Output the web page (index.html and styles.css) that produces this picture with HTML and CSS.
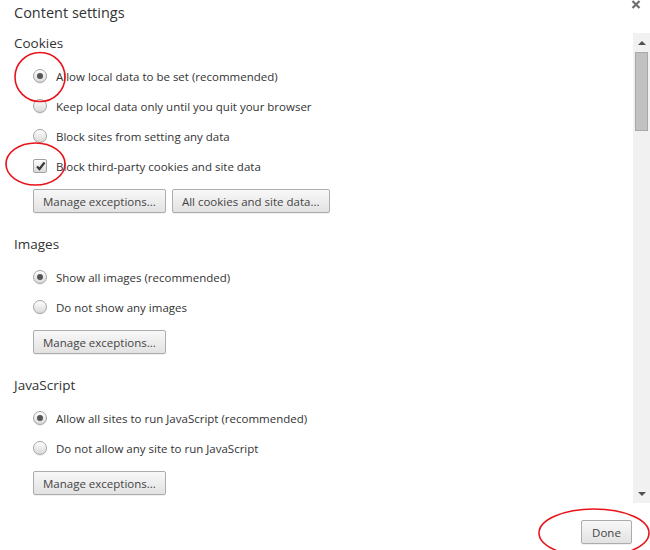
FILE: index.html
```html
<!DOCTYPE html>
<html lang="en">
<head>
  <meta charset="UTF-8" />
  <meta name="viewport" content="width=device-width, initial-scale=1.0" />
  <link rel="stylesheet" href="styles.css">
  <title>Content settings</title>
</head>
<body>
<div class="dialog">
  <div class="dialog-header">
    <h1>Content settings</h1>
    <span class="close-btn">
      <svg width="10" height="9" viewBox="0 0 10 9"><path d="M1.5 1 L8.5 8 M8.5 1 L1.5 8" stroke="#6e6e6e" stroke-width="2.2"/></svg>
    </span>
  </div>

  <div class="dialog-body">
    <div class="scroll-area">

      <!-- Cookies -->
      <section class="setting-group">
        <h2>Cookies</h2>
        <label class="option"><span class="radio checked"></span>Allow local data to be set (recommended)</label>
        <label class="option"><span class="radio"></span>Keep local data only until you quit your browser</label>
        <label class="option"><span class="radio"></span>Block sites from setting any data</label>
        <label class="option"><span class="checkbox checked">
          <svg width="11" height="11" viewBox="0 0 11 11"><path d="M2 5.5 L4.5 8 L9.5 1.5" fill="none" stroke="#3a3a3a" stroke-width="2.2"/></svg>
        </span>Block third-party cookies and site data</label>
        <div class="button-row">
          <button class="btn">Manage exceptions...</button>
          <button class="btn">All cookies and site data...</button>
        </div>
      </section>

      <!-- Images -->
      <section class="setting-group">
        <h2>Images</h2>
        <label class="option"><span class="radio checked"></span>Show all images (recommended)</label>
        <label class="option"><span class="radio"></span>Do not show any images</label>
        <div class="button-row">
          <button class="btn">Manage exceptions...</button>
        </div>
      </section>

      <!-- JavaScript -->
      <section class="setting-group">
        <h2>JavaScript</h2>
        <label class="option"><span class="radio checked"></span>Allow all sites to run JavaScript (recommended)</label>
        <label class="option"><span class="radio"></span>Do not allow any site to run JavaScript</label>
        <div class="button-row">
          <button class="btn">Manage exceptions...</button>
        </div>
      </section>

    </div>

    <div class="scrollbar">
      <span class="arrow up"></span>
      <span class="thumb"></span>
      <span class="arrow down"></span>
    </div>
  </div>

  <div class="dialog-footer">
    <button class="btn done-btn">Done</button>
  </div>
</div>

<!-- red annotation circles -->
<svg class="annotations" width="650" height="550" viewBox="0 0 650 550">
  <ellipse cx="40" cy="77" rx="25" ry="24.5" fill="none" stroke="#e8141b" stroke-width="1.6"/>
  <ellipse cx="35.5" cy="164" rx="29.5" ry="21" fill="none" stroke="#e8141b" stroke-width="1.6"/>
  <ellipse cx="594" cy="533" rx="55" ry="24" fill="none" stroke="#e8141b" stroke-width="1.6"/>
</svg>
</body>
</html>
```

FILE: styles.css
```css
/* Page */
body {
  margin: 0;
  background: #fff;
  font-family: 'Open Sans', Arial, sans-serif;
  font-size: 11.5px;
  color: #333;
  position: relative;
  width: 650px;
  height: 550px;
  overflow: hidden;
}

/* Dialog header */
.dialog-header {
  height: 33px;
  position: relative;
}

.dialog-header h1 {
  margin: 0;
  padding: 4px 14px 0;
  font-size: 14.5px;
  font-weight: normal;
  line-height: 18px;
  color: #333;
}

.close-btn {
  position: absolute;
  top: 0;
  left: 631px;
  line-height: 0;
}

/* Body with scroll area */
.dialog-body {
  display: flex;
  height: 470px;
}

.scroll-area {
  flex: 1;
  padding: 0 0 0 14px;
  overflow: hidden;
}

.setting-group {
  margin-bottom: 21px;
}

.setting-group h2 {
  margin: 0 0 8px;
  font-size: 13.5px;
  font-weight: normal;
  line-height: 20px;
  color: #333;
}

.option {
  display: flex;
  align-items: center;
  height: 30px;
  padding-left: 19px;
  gap: 9px;
  color: #333;
}

/* Radio buttons */
.radio {
  width: 12px;
  height: 12px;
  border: 1px solid #a3a3a3;
  border-radius: 50%;
  background: linear-gradient(#fdfdfd, #d9d9d9);
  box-shadow: inset 0 1px 1px rgba(255, 255, 255, 0.9), 0 1px 0 rgba(0, 0, 0, 0.05);
  display: flex;
  align-items: center;
  justify-content: center;
  flex-shrink: 0;
}

.radio.checked::after {
  content: "";
  width: 6px;
  height: 6px;
  border-radius: 50%;
  background: #555;
}

/* Checkbox */
.checkbox {
  width: 12px;
  height: 12px;
  border: 1px solid #a3a3a3;
  border-radius: 2px;
  background: linear-gradient(#fdfdfd, #d9d9d9);
  display: flex;
  align-items: center;
  justify-content: center;
  flex-shrink: 0;
}

/* Buttons */
.button-row {
  display: flex;
  gap: 6px;
  padding-left: 19px;
  margin-top: 8px;
}

.btn {
  height: 24px;
  padding: 0 9px;
  border: 1px solid #acacac;
  border-radius: 2px;
  background: linear-gradient(#f8f8f8, #e2e2e2);
  font-family: 'Open Sans', Arial, sans-serif;
  font-size: 11.5px;
  color: #444;
  box-shadow: 0 1px 0 rgba(0, 0, 0, 0.06);
}

/* Scrollbar */
.scrollbar {
  width: 17px;
  background: #f1f1f1;
  display: flex;
  flex-direction: column;
  align-items: center;
  position: relative;
}

.arrow {
  width: 0;
  height: 0;
  border-left: 4px solid transparent;
  border-right: 4px solid transparent;
}

.arrow.up {
  margin-top: 8px;
  border-bottom: 4px solid #505050;
}

.arrow.down {
  margin-top: auto;
  margin-bottom: 7px;
  border-top: 4px solid #505050;
}

.thumb {
  margin-top: 7px;
  width: 11px;
  height: 77px;
  background: #c1c1c1;
  border: 1px solid #a8a8a8;
}

/* Footer */
.dialog-footer {
  display: flex;
  justify-content: flex-end;
  padding: 17px 18px 0 0;
}

.done-btn {
  width: 51px;
  padding: 0;
}

/* Annotation overlay */
.annotations {
  position: absolute;
  top: 0;
  left: 0;
  pointer-events: none;
}
```
